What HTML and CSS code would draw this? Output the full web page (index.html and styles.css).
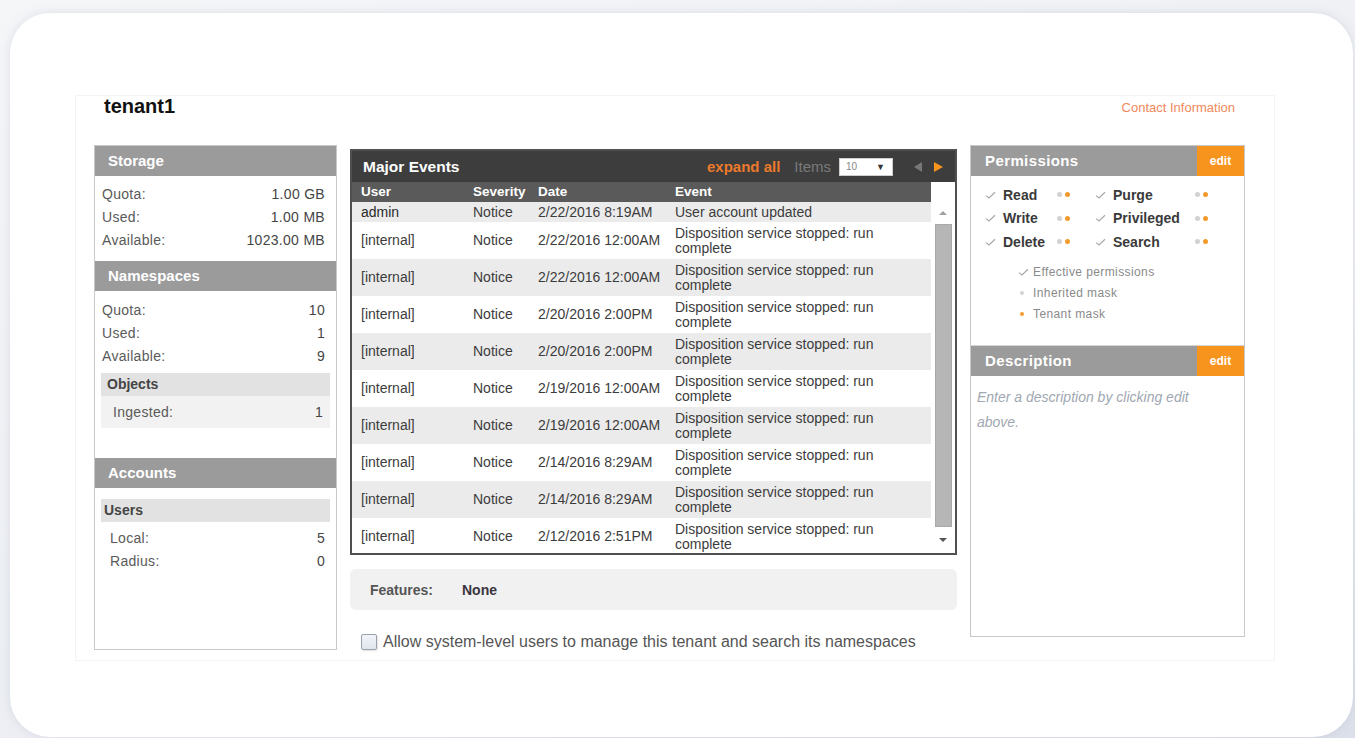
FILE: index.html
```html
<!DOCTYPE html>
<html lang="en">
<head>
<meta charset="utf-8">
<title>tenant1</title>
<link rel="stylesheet" href="styles.css">
</head>
<body>
<div class="card">
  <section class="tenant">
    <header class="tenant-head">
      <h1 class="tenant-name">tenant1</h1>
      <a class="contact-link" href="#">Contact Information</a>
    </header>

    <div class="columns">
      <!-- usage summary -->
      <aside class="panel side-left">
        <h2 class="panel-title">Storage</h2>
        <dl class="stats">
          <div class="stat"><dt>Quota:</dt><dd>1.00 GB</dd></div>
          <div class="stat"><dt>Used:</dt><dd>1.00 MB</dd></div>
          <div class="stat"><dt>Available:</dt><dd>1023.00 MB</dd></div>
        </dl>

        <h2 class="panel-title">Namespaces</h2>
        <dl class="stats stats-ns">
          <div class="stat"><dt>Quota:</dt><dd>10</dd></div>
          <div class="stat"><dt>Used:</dt><dd>1</dd></div>
          <div class="stat"><dt>Available:</dt><dd>9</dd></div>
        </dl>
        <div class="subgroup">
          <h3 class="subgroup-title">Objects</h3>
          <div class="stat sub-stat"><span>Ingested:</span><span class="val">1</span></div>
        </div>

        <h2 class="panel-title accounts-title">Accounts</h2>
        <div class="subgroup users-group">
          <h3 class="subgroup-title users-title">Users</h3>
        </div>
        <dl class="stats stats-users">
          <div class="stat"><dt>Local:</dt><dd>5</dd></div>
          <div class="stat"><dt>Radius:</dt><dd>0</dd></div>
        </dl>
      </aside>

      <!-- events list -->
      <main class="center">
        <div class="events">
          <div class="events-bar">
            <span class="events-title">Major Events</span>
            <div class="events-tools">
              <a class="expand-all" href="#">expand all</a>
              <span class="items-label">Items</span>
              <div class="items-select"><span>10</span><span class="caret">&#9660;</span></div>
              <span class="pager prev"></span>
              <span class="pager next"></span>
            </div>
          </div>
          <div class="events-body">
            <div class="table-wrap">
              <table class="events-table">
                <colgroup>
                  <col class="c-user"><col class="c-sev"><col class="c-date"><col class="c-event">
                </colgroup>
                <thead>
                  <tr><th>User</th><th>Severity</th><th>Date</th><th>Event</th></tr>
                </thead>
                <tbody>
                  <tr class="single"><td class="strong">admin</td><td>Notice</td><td>2/22/2016 8:19AM</td><td>User account updated</td></tr>
                  <tr><td>[internal]</td><td>Notice</td><td>2/22/2016 12:00AM</td><td>Disposition service stopped: run<br>complete</td></tr>
                  <tr><td>[internal]</td><td>Notice</td><td>2/22/2016 12:00AM</td><td>Disposition service stopped: run<br>complete</td></tr>
                  <tr><td>[internal]</td><td>Notice</td><td>2/20/2016 2:00PM</td><td>Disposition service stopped: run<br>complete</td></tr>
                  <tr><td>[internal]</td><td>Notice</td><td>2/20/2016 2:00PM</td><td>Disposition service stopped: run<br>complete</td></tr>
                  <tr><td>[internal]</td><td>Notice</td><td>2/19/2016 12:00AM</td><td>Disposition service stopped: run<br>complete</td></tr>
                  <tr><td>[internal]</td><td>Notice</td><td>2/19/2016 12:00AM</td><td>Disposition service stopped: run<br>complete</td></tr>
                  <tr><td>[internal]</td><td>Notice</td><td>2/14/2016 8:29AM</td><td>Disposition service stopped: run<br>complete</td></tr>
                  <tr><td>[internal]</td><td>Notice</td><td>2/14/2016 8:29AM</td><td>Disposition service stopped: run<br>complete</td></tr>
                  <tr><td>[internal]</td><td>Notice</td><td>2/12/2016 2:51PM</td><td>Disposition service stopped: run<br>complete</td></tr>
                </tbody>
              </table>
            </div>
            <div class="scrollbar">
              <span class="scroll-up"></span>
              <span class="scroll-thumb"></span>
              <span class="scroll-down"></span>
            </div>
          </div>
        </div>

        <div class="features">
          <span class="features-label">Features:</span>
          <span class="features-value">None</span>
        </div>

        <label class="allow">
          <span class="checkbox"></span>
          Allow system-level users to manage this tenant and search its namespaces
        </label>
      </main>

      <!-- permissions and description -->
      <aside class="panel side-right">
        <div class="panel-head">
          <h2 class="panel-title">Permissions</h2>
          <a class="edit-btn" href="#">edit</a>
        </div>
        <div class="perm-grid">
          <span class="chk"><svg width="11" height="8" viewBox="0 0 11 8"><path d="M1 4.6 L4 7 L10 1.2" fill="none" stroke="#a8a8a8" stroke-width="1.2"/></svg></span>
          <span class="perm-name">Read</span>
          <span class="marks"><i class="dot gray"></i><i class="dot orange"></i></span>
          <span class="chk"><svg width="11" height="8" viewBox="0 0 11 8"><path d="M1 4.6 L4 7 L10 1.2" fill="none" stroke="#a8a8a8" stroke-width="1.2"/></svg></span>
          <span class="perm-name">Purge</span>
          <span class="marks"><i class="dot gray"></i><i class="dot orange"></i></span>

          <span class="chk"><svg width="11" height="8" viewBox="0 0 11 8"><path d="M1 4.6 L4 7 L10 1.2" fill="none" stroke="#a8a8a8" stroke-width="1.2"/></svg></span>
          <span class="perm-name">Write</span>
          <span class="marks"><i class="dot gray"></i><i class="dot orange"></i></span>
          <span class="chk"><svg width="11" height="8" viewBox="0 0 11 8"><path d="M1 4.6 L4 7 L10 1.2" fill="none" stroke="#a8a8a8" stroke-width="1.2"/></svg></span>
          <span class="perm-name">Privileged</span>
          <span class="marks"><i class="dot gray"></i><i class="dot orange"></i></span>

          <span class="chk"><svg width="11" height="8" viewBox="0 0 11 8"><path d="M1 4.6 L4 7 L10 1.2" fill="none" stroke="#a8a8a8" stroke-width="1.2"/></svg></span>
          <span class="perm-name">Delete</span>
          <span class="marks"><i class="dot gray"></i><i class="dot orange"></i></span>
          <span class="chk"><svg width="11" height="8" viewBox="0 0 11 8"><path d="M1 4.6 L4 7 L10 1.2" fill="none" stroke="#a8a8a8" stroke-width="1.2"/></svg></span>
          <span class="perm-name">Search</span>
          <span class="marks"><i class="dot gray"></i><i class="dot orange"></i></span>
        </div>
        <ul class="legend">
          <li><span class="legend-icon"><svg width="11" height="8" viewBox="0 0 11 8"><path d="M1 4.6 L4 7 L10 1.2" fill="none" stroke="#a8a8a8" stroke-width="1.2"/></svg></span>Effective permissions</li>
          <li><span class="legend-icon"><i class="dot small gray"></i></span>Inherited mask</li>
          <li><span class="legend-icon"><i class="dot small orange"></i></span>Tenant mask</li>
        </ul>

        <div class="panel-head desc-head">
          <h2 class="panel-title">Description</h2>
          <a class="edit-btn" href="#">edit</a>
        </div>
        <p class="desc-text">Enter a description by clicking edit<br>above.</p>
      </aside>
    </div>
  </section>
</div>
</body>
</html>
```

FILE: styles.css
```css
* {
  box-sizing: border-box;
}

html,
body {
  margin: 0;
  height: 100%;
}

body {
  background: linear-gradient(160deg, #f5f6f8 0%, #eceef3 65%, #dce0ea 100%);
  font-family: "Liberation Sans", Arial, sans-serif;
  color: #444;
  overflow: hidden;
}

/* white rounded sheet */
.card {
  margin: 13px 2px 0 10px;
  height: 724px;
  background: #fff;
  border-radius: 40px;
  box-shadow: 0 0 10px rgba(170, 178, 195, 0.35);
  padding: 82px 0 0 65px;
}

.tenant {
  width: 1200px;
  height: 566px;
  border: 1px solid #f4f4f4;
  padding: 0 29px 0 18px;
}

.tenant-head {
  height: 49px;
  display: flex;
  justify-content: space-between;
  align-items: flex-start;
}

.tenant-name {
  margin: 0 0 0 10px;
  font-size: 20px;
  line-height: 20px;
  font-weight: 700;
  color: #111;
}

.contact-link {
  margin: 4px 10px 0 0;
  font-size: 13px;
  line-height: 15px;
  color: #f0885c;
  text-decoration: none;
}

.columns {
  display: flex;
  align-items: flex-start;
  gap: 13px;
}

/* shared panel chrome */
.panel {
  border: 1px solid #c8c8c8;
  background: #fff;
}

.panel-title {
  margin: 0;
  height: 30px;
  line-height: 30px;
  padding-left: 13px;
  background: #9b9b9b;
  color: #fff;
  font-size: 15px;
  font-weight: 700;
}

/* left column */
.side-left {
  width: 243px;
  height: 505px;
}

.stats {
  margin: 0;
  padding: 7px 11px 9px 7px;
}

.stats-ns {
  padding-top: 8px;
  padding-bottom: 5px;
}

.stats-users {
  padding: 5px 11px 0 15px;
}

.stat {
  display: flex;
  justify-content: space-between;
  height: 23px;
  line-height: 23px;
  font-size: 14px;
  letter-spacing: 0.3px;
  color: #5a5a5a;
}

.stat dt,
.stat dd {
  margin: 0;
}

.stat dd,
.stat .val {
  color: #454545;
}

.subgroup {
  margin: 0 6px;
}

.subgroup-title {
  margin: 0;
  height: 23px;
  line-height: 23px;
  padding-left: 6px;
  background: #e2e2e2;
  color: #444;
  font-size: 14px;
  font-weight: 700;
}

.sub-stat {
  height: 32px;
  line-height: 32px;
  padding: 0 7px 0 12px;
  background: #f2f2f2;
}

.accounts-title {
  margin-top: 30px;
}

.users-group {
  margin-top: 11px;
}

.users-title {
  padding-left: 3px;
}

/* middle column */
.center {
  width: 607px;
  margin-top: 4px;
}

.events {
  height: 406px;
  border: 2px solid #505050;
  background: #fff;
}

.events-bar {
  height: 31px;
  background: #3d3d3d;
  display: flex;
  align-items: center;
  justify-content: space-between;
  padding: 0 12px 0 11px;
}

.events-title {
  color: #fff;
  font-size: 15.5px;
  font-weight: 700;
}

.events-tools {
  display: flex;
  align-items: center;
}

.expand-all {
  color: #ec7a2c;
  font-size: 15px;
  font-weight: 700;
  text-decoration: none;
  margin-right: 14px;
}

.items-label {
  color: #7a7a7a;
  font-size: 15px;
  margin-right: 8px;
}

.items-select {
  width: 54px;
  height: 18px;
  background: #fff;
  border: 1px solid #cfcfcf;
  display: flex;
  justify-content: space-between;
  align-items: center;
  padding: 0 7px 0 6px;
  font-size: 10px;
  color: #888;
  margin-right: 21px;
}

.caret {
  color: #333;
  font-size: 9px;
}

.pager {
  width: 0;
  height: 0;
  border-top: 5px solid transparent;
  border-bottom: 5px solid transparent;
}

.pager.prev {
  border-right: 8px solid #777;
  margin-right: 12px;
}

.pager.next {
  border-left: 9px solid #f7941d;
}

.events-body {
  display: flex;
  height: 371px;
}

.table-wrap {
  width: 579px;
  height: 371px;
  overflow: hidden;
}

.events-table {
  width: 579px;
  table-layout: fixed;
  border-collapse: collapse;
}

.c-user { width: 112px; }
.c-sev { width: 65px; }
.c-date { width: 137px; }
.c-event { width: 265px; }

.events-table th {
  height: 20px;
  padding: 0 0 0 9px;
  background: #5a5a5a;
  color: #fff;
  text-align: left;
  font-size: 13.5px;
  font-weight: 700;
  line-height: 20px;
}

.events-table td {
  height: 37px;
  padding: 0 0 0 9px;
  font-size: 14px;
  line-height: 15px;
  color: #3c3c3c;
  vertical-align: middle;
  white-space: nowrap;
}

.events-table tr.single td {
  height: 20px;
}

.events-table td.strong {
  color: #2a2a2a;
}

.events-table tbody tr:nth-child(odd) {
  background: #ebebeb;
}

.scrollbar {
  width: 24px;
  background: #fff;
  display: flex;
  flex-direction: column;
  align-items: center;
  padding-top: 29px;
}

.scroll-up,
.scroll-down {
  width: 0;
  height: 0;
  border-left: 4px solid transparent;
  border-right: 4px solid transparent;
}

.scroll-up {
  border-bottom: 4px solid #a0a0a0;
  margin-bottom: 9px;
}

.scroll-down {
  border-top: 4px solid #555;
  margin-top: 11px;
}

.scroll-thumb {
  width: 17px;
  height: 303px;
  background: #b6b6b6;
  border: 1px solid #a9a9a9;
}

.features {
  margin-top: 14px;
  height: 41px;
  background: #f1f1f1;
  border-radius: 6px;
  display: flex;
  align-items: center;
  padding-left: 20px;
  font-size: 14px;
  font-weight: 700;
}

.features-label {
  width: 92px;
  color: #555;
}

.features-value {
  color: #3b3540;
}

.allow {
  margin-top: 22px;
  padding-left: 11px;
  display: flex;
  align-items: center;
  gap: 6px;
  font-size: 16px;
  line-height: 20px;
  color: #555;
}

.checkbox {
  width: 16px;
  height: 16px;
  border: 1px solid #9aa1aa;
  border-radius: 2px;
  background: linear-gradient(#f1f4f8, #dfe5ee);
  box-shadow: 1px 1px 2px rgba(0, 0, 0, 0.12);
}

/* right column */
.side-right {
  width: 275px;
  height: 492px;
}

.panel-head {
  display: flex;
  height: 30px;
  background: #9b9b9b;
}

.panel-head .panel-title {
  flex: 1;
  padding-left: 14px;
  letter-spacing: 0.4px;
}

.edit-btn {
  width: 47px;
  background: #f7941d;
  color: #fff;
  font-size: 12px;
  font-weight: 700;
  line-height: 30px;
  text-align: center;
  text-decoration: none;
}

.perm-grid {
  display: grid;
  grid-template-columns: 18px 54px 38px 18px 82px 1fr;
  grid-auto-rows: 23.5px;
  align-items: center;
  padding: 7px 0 0 14px;
}

.chk {
  display: flex;
  align-items: center;
}

.perm-name {
  font-size: 14px;
  font-weight: 700;
  color: #3a3a3a;
}

.marks {
  display: flex;
  gap: 3px;
}

.dot {
  display: block;
  width: 5px;
  height: 5px;
  border-radius: 50%;
}

.dot.gray {
  background: #d2d2d2;
}

.dot.orange {
  background: #f39a2b;
}

.dot.small {
  width: 4px;
  height: 4px;
}

.legend {
  list-style: none;
  margin: 8px 0 0;
  padding: 0 0 0 46px;
  font-size: 12px;
  line-height: 21px;
  letter-spacing: 0.4px;
  color: #8a8a8a;
}

.legend li {
  display: flex;
  align-items: center;
}

.legend-icon {
  width: 16px;
  display: flex;
  align-items: center;
  padding-left: 1px;
}

.legend-icon .dot {
  margin-left: 2px;
}

.desc-head {
  margin-top: 20px;
  height: 31px;
  border-top: 1px solid #d6d6d6;
}

.desc-text {
  margin: 0;
  padding: 9px 6px 0;
  font-size: 14px;
  line-height: 25px;
  font-style: italic;
  color: #a0a7b1;
}
```
